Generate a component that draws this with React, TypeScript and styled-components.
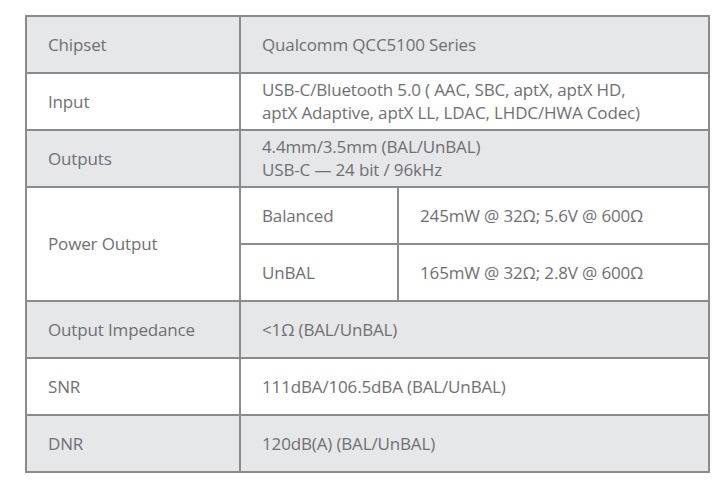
import React from 'react';
import styled, { createGlobalStyle } from 'styled-components';

const GlobalStyle = createGlobalStyle`
  html, body {
    margin: 0;
    padding: 0;
    background: #ffffff;
  }
  body {
    font-family: "Open Sans", "Noto Sans", sans-serif;
  }
`;

const Page = styled.div`
  width: 720px;
  height: 482px;
  padding: 15px 0 0 25px;
  box-sizing: border-box;
`;

const SpecTable = styled.table`
  border-collapse: collapse;
  width: 683px;
  table-layout: fixed;
  color: #6f7073;
  font-size: 17px;
  letter-spacing: -0.15px;
  line-height: 23px;
`;

const Row = styled.tr<{ $shaded?: boolean }>`
  background: ${(p) => (p.$shaded ? '#e6e7e8' : '#ffffff')};
  height: 57px;
`;

const Cell = styled.td`
  border: 2px solid #8a8b8d;
  padding: 0 0 1px 21px;
  vertical-align: middle;
  white-space: nowrap;
`;

type Spec = { label: string; value: string[]; shaded: boolean };

const top: Spec[] = [
  { label: 'Chipset', value: ['Qualcomm QCC5100 Series'], shaded: true },
  {
    label: 'Input',
    value: [
      'USB-C/Bluetooth 5.0 ( AAC, SBC, aptX, aptX HD,',
      'aptX Adaptive, aptX LL, LDAC, LHDC/HWA Codec)',
    ],
    shaded: false,
  },
  {
    label: 'Outputs',
    value: ['4.4mm/3.5mm (BAL/UnBAL)', 'USB-C \u2014 24 bit / 96kHz'],
    shaded: true,
  },
];

const bottom: Spec[] = [
  { label: 'Output Impedance', value: ['<1\u03A9 (BAL/UnBAL)'], shaded: true },
  { label: 'SNR', value: ['111dBA/106.5dBA (BAL/UnBAL)'], shaded: false },
  { label: 'DNR', value: ['120dB(A) (BAL/UnBAL)'], shaded: true },
];

function Lines({ value }: { value: string[] }) {
  return (
    <>
      {value.map((line, i) => (
        <div key={i}>{line}</div>
      ))}
    </>
  );
}

function App() {
  return (
    <Page>
      <GlobalStyle />
      <SpecTable>
        <colgroup>
          <col style={{ width: 214 }} />
          <col style={{ width: 158 }} />
          <col style={{ width: 311 }} />
        </colgroup>
        <tbody>
          {top.map((s) => (
            <Row key={s.label} $shaded={s.shaded}>
              <Cell>{s.label}</Cell>
              <Cell colSpan={2}>
                <Lines value={s.value} />
              </Cell>
            </Row>
          ))}
          <Row>
            <Cell rowSpan={2}>Power Output</Cell>
            <Cell>Balanced</Cell>
            <Cell>245mW @ 32&Omega;; 5.6V @ 600&Omega;</Cell>
          </Row>
          <Row>
            <Cell>UnBAL</Cell>
            <Cell>165mW @ 32&Omega;; 2.8V @ 600&Omega;</Cell>
          </Row>
          {bottom.map((s) => (
            <Row key={s.label} $shaded={s.shaded}>
              <Cell>{s.label}</Cell>
              <Cell colSpan={2}>
                <Lines value={s.value} />
              </Cell>
            </Row>
          ))}
        </tbody>
      </SpecTable>
    </Page>
  );
}

export default App;
